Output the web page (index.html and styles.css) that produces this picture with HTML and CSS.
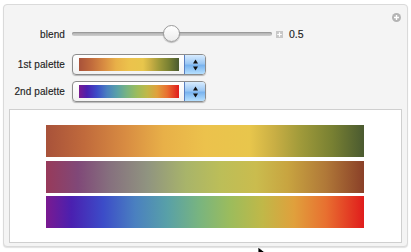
FILE: index.html
```html
<!DOCTYPE html>
<html lang="en">
<head>
    <meta charset="UTF-8">
    <title>Palette Blend</title>
    <link rel="stylesheet" href="styles.css">
</head>
<body>

    <div class="panel">
        <span class="panel-plus">
            <svg width="9" height="9" viewBox="0 0 9 9"><circle cx="4.5" cy="4.5" r="4.5" fill="#b4b4b4"/><path d="M4.5 2v5M2 4.5h5" stroke="#fff" stroke-width="1.4"/></svg>
        </span>

        <div class="controls">
            <div class="row row-slider">
                <label class="label">blend</label>
                <div class="slider">
                    <div class="track"></div>
                    <div class="thumb"></div>
                </div>
                <span class="step">
                    <svg width="7" height="7" viewBox="0 0 7 7"><rect width="7" height="7" fill="#c8c8c8"/><path d="M3.5 1.2v4.6M1.2 3.5h4.6" stroke="#fff" stroke-width="1.2"/></svg>
                </span>
                <span class="value">0.5</span>
            </div>

            <div class="row row-popup">
                <label class="label">1st palette</label>
                <div class="popup">
                    <div class="swatch grad-first"></div>
                    <div class="popup-btn">
                        <svg width="7" height="14" viewBox="0 0 7 14"><path d="M3.5 1.5L6 5.5H1z M3.5 12.5L6 8.5H1z" fill="#111"/></svg>
                    </div>
                </div>
            </div>

            <div class="row row-popup">
                <label class="label">2nd palette</label>
                <div class="popup">
                    <div class="swatch grad-second"></div>
                    <div class="popup-btn">
                        <svg width="7" height="14" viewBox="0 0 7 14"><path d="M3.5 1.5L6 5.5H1z M3.5 12.5L6 8.5H1z" fill="#111"/></svg>
                    </div>
                </div>
            </div>
        </div>

        <div class="output">
            <div class="bar grad-first"></div>
            <div class="bar grad-blend"></div>
            <div class="bar grad-second"></div>
        </div>
    </div>

    <svg class="cursor" width="10" height="14" viewBox="0 0 10 14"><path d="M1 1v11l3-3 2 4 2-1-2-4h4z" fill="#000" stroke="#fff" stroke-width="0.8"/></svg>

</body>
</html>
```

FILE: styles.css
```css
body {
    margin: 0;
    background-color: #fff;
    font-family: "Liberation Sans", Arial, sans-serif;
    font-size: 10px;
    color: #1e1e1e;
    width: 411px;
    height: 252px;
    overflow: hidden;
    position: relative;
}

.panel {
    position: relative;
    margin: 4px 0 0 3px;
    width: 403px;
    height: 241px;
    background-color: #f4f4f4;
    border: 1px solid #dadada;
    border-radius: 4px;
    box-shadow: 0 1px 1px rgba(0, 0, 0, 0.12);
    display: flex;
    flex-direction: column;
}

.panel-plus {
    position: absolute;
    top: 8px;
    right: 6px;
    line-height: 0;
}

.controls {
    padding-top: 20px;
    display: flex;
    flex-direction: column;
}

.row {
    display: flex;
    align-items: center;
}

.label {
    width: 61px;
    text-align: right;
    margin-right: 7px;
    letter-spacing: 0.1px;
    -webkit-text-stroke: 0.15px #1e1e1e;
}

.row-slider {
    height: 18px;
    margin-bottom: 11px;
}

.row-popup {
    height: 21px;
    margin-bottom: 6px;
}

.slider {
    position: relative;
    width: 200px;
    height: 18px;
    display: flex;
    align-items: center;
}

.track {
    width: 100%;
    height: 4px;
    border-radius: 2px;
    background: linear-gradient(#a9a9a9, #cfcfcf);
    box-shadow: inset 0 1px 0 #9a9a9a;
}

.thumb {
    position: absolute;
    left: 91px;
    top: 0;
    width: 15px;
    height: 15px;
    border-radius: 50%;
    border: 1px solid #9c9c9c;
    background: linear-gradient(#ffffff, #ececec);
    box-shadow: 0 1px 1px rgba(0, 0, 0, 0.25);
}

.step {
    margin-left: 4px;
    line-height: 0;
}

.value {
    margin-left: 6px;
    font-size: 10.5px;
    -webkit-text-stroke: 0.15px #1e1e1e;
}

.popup {
    width: 132px;
    height: 19px;
    border: 1px solid #8c8c8c;
    border-radius: 4px;
    background: linear-gradient(#ffffff, #f2f2f2);
    box-shadow: 0 1px 1px rgba(0, 0, 0, 0.25);
    display: flex;
    align-items: center;
    overflow: hidden;
}

.swatch {
    margin-left: 6px;
    width: 100px;
    height: 13px;
}

.popup-btn {
    margin-left: auto;
    width: 20px;
    height: 100%;
    border-left: 1px solid #5a7fc0;
    background: linear-gradient(#d8ecff 0%, #9cc8f4 45%, #7ab4ef 55%, #b6e0ff 100%);
    display: flex;
    align-items: center;
    justify-content: center;
}

.output {
    margin: 1px 5px 3px 5px;
    flex: 1;
    background-color: #fff;
    border: 1px solid #cfcfcf;
    padding: 15px 0 0 36px;
    display: flex;
    flex-direction: column;
    gap: 3.5px;
}

.bar {
    width: 318px;
    height: 32px;
    box-shadow: 0 0 0 1px rgba(255, 255, 255, 0.5);
}

.grad-first {
    background: linear-gradient(to right,
        #a8523a 0%, #c06a3c 12%, #d88c42 25%, #e8b048 37%, #ecc24c 50%,
        #e8c64c 64%, #c8ae44 72%, #a09a3a 80%, #788032 90%, #4a5a30 100%);
}

.grad-blend {
    background: linear-gradient(to right,
        #983a5a 0%, #804878 10%, #86707e 20%, #909480 32%, #a8b46a 44%,
        #bcbe58 55%, #cabc4e 66%, #c8a440 76%, #b07838 88%, #8a4028 100%);
}

.grad-second {
    background: linear-gradient(to right,
        #7a1a90 0%, #4a20b0 8%, #3c4cc8 18%, #4a80c0 28%, #58a0a8 38%,
        #78b480 48%, #9cbc5c 58%, #c0b848 68%, #e0a03c 78%, #e87030 88%, #e01c1c 100%);
}

.cursor {
    position: absolute;
    left: 257px;
    top: 246px;
}
```
